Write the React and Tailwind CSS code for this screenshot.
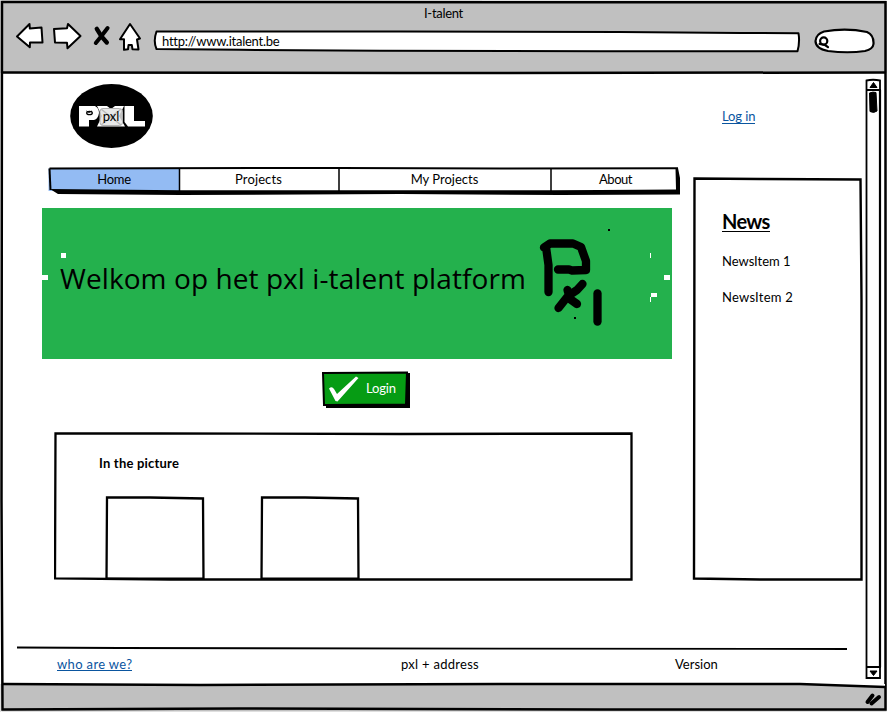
const ink = "#000";

function BackArrow() {
  return (
    <svg className="h-[28px] w-[29px]" viewBox="15 23 29 28" fill="#fff" stroke={ink} strokeWidth="2" strokeLinejoin="round">
      <path d="M17 37.5 L29.5 25 L29.8 29.5 L41.5 28.5 L42.5 43.5 L30 43.5 L29.8 48.3 Z" />
    </svg>
  );
}

function ForwardArrow() {
  return (
    <svg className="ml-[8px] h-[28px] w-[30px]" viewBox="52 23 30 28" fill="#fff" stroke={ink} strokeWidth="2" strokeLinejoin="round">
      <path d="M54 30 L67 29.3 L68 25 L80.5 37 L67.5 49.3 L67 43.8 L55 43.5 Q54.5 37 54 30 Z" />
    </svg>
  );
}

function StopIcon() {
  return (
    <svg className="ml-[10px] h-[28px] w-[20px]" viewBox="92 22 20 28" fill="none" stroke={ink} strokeLinecap="round">
      <path d="M96.8 28.8 L101.5 36.5 L106.8 42.5" strokeWidth="4.4" />
      <path d="M107.6 28 L101.5 36 L95.8 43" strokeWidth="4" />
    </svg>
  );
}

function HomeIcon() {
  return (
    <svg className="ml-[6px] h-[30px] w-[24px]" viewBox="118 22 24 30" fill="#fff" stroke={ink} strokeWidth="2" strokeLinejoin="round">
      <path d="M130 24 L140 38.5 L137 39.5 L138.5 49.5 L132.5 49.3 L131.8 45 L128.5 45 L128 49.3 L124 49.8 L124 39.3 L120 39.3 Z" />
    </svg>
  );
}

function Toolbar() {
  return (
    <div className="flex h-[30px] items-start">
      <BackArrow />
      <ForwardArrow />
      <StopIcon />
      <HomeIcon />
      <div className="relative ml-[11px] mt-[7px] flex h-[25px] w-[648px] items-center pl-[9px]">
        <svg className="absolute inset-0" width="648" height="25" viewBox="153 29 648 25" fill="#fff" stroke={ink} strokeWidth="2" strokeLinejoin="round">
          <path d="M156.5 31.5 Q240 31.2 400 31.5 T620 32 L740 33 L798.5 33.3 Q800 42 797.5 51.3 L600 51.3 L380 50.7 L240 49.8 L156.5 49 Q153 41 156.5 31.5 Z" />
        </svg>
        <span className="relative text-[13px] tracking-[-0.24px]">http://www.italent.be</span>
      </div>
      <svg className="ml-[12px] mt-[4px] h-[28px] w-[63px]" viewBox="813 26 63 28" fill="#fff" stroke={ink} strokeWidth="2.2" strokeLinejoin="round">
        <path d="M824 31.5 Q846 27.5 867 32 Q874 35 873.5 44 Q873 49 865 51 Q848 53.5 828 51 Q815.5 48.5 815.5 41 Q816 34 824 31.5 Z" />
        <circle cx="823.7" cy="41" r="3.6" />
        <path d="M819.500 44 L825 45 L828 47.200" fill="none" strokeLinecap="round" />
      </svg>
    </div>
  );
}

function Logo() {
  return (
    <div className="relative ml-[28px] mt-[10px] flex h-[66px] w-[84px] items-center justify-center">
      <svg className="absolute inset-0" width="84" height="66" viewBox="70 83 84 66">
        <ellipse cx="111.5" cy="116" rx="41.3" ry="32" fill={ink} />
        <g fill="#fff">
          <path d="M79 106 H95 Q99 108 99 113 Q98 119 94 120 H89 V126.500 H79 Z" />
          <path d="M97 106 H107 L111 109 L115 106 H124 L119 116 L125 126.500 H97 L102 116 Z" />
        </g>
        <ellipse cx="89.500" cy="113" rx="2.800" ry="1.700" fill="#fff" stroke={ink} strokeWidth="1.300" />
        <path d="M86.500 111 L89 112.500 L92 111" fill="none" stroke={ink} />
        <rect x="100" y="108.500" width="22.500" height="17" rx="3" fill="#e4e4e4" fillOpacity=".85" stroke="#b0b0b0" />
        <path d="M101 109 L121 125 M121 109 L101 125" stroke="#bbb" strokeWidth="1.500" />
        <path d="M124.500 106 H134 V121 H145 V126.500 H128 L124.500 122 Z" fill="#fff" />
      </svg>
      <span className="relative left-[-1px] top-[1px] text-[13px] tracking-[-0.1px]">pxl</span>
    </div>
  );
}

function NavBar() {
  return (
    <nav className="relative ml-[6px] mt-[17px] flex h-[29px] w-[633px] pl-[1px] text-[13px] leading-[27px]">
      <svg className="absolute inset-0" width="633" height="29" viewBox="48 166 633 29">
        <path d="M50 169 L676.500 168.500 L678.500 193 L52 193 Z" fill="#fff" />
        <path d="M48.500 168.500 L179 168.500 V191 H48.500 Z" fill="#93bbf3" />
        <path d="M49.500 168.500 L340 167.900 L500 168.500 L678 168.200" fill="none" stroke={ink} strokeWidth="2" />
        <path d="M49.500 168.500 L50.500 190" stroke={ink} strokeWidth="2" />
        <path d="M50 189 L180 190.300 L551 190.300 L600 190 L676 189.500 L675.500 168 L678 168 L680 178 L680 194.500 L560 195 L400 194 L180 195 L58 194 Z" fill={ink} />
        <path d="M179.500 168 V192 M339 168 V192 M551 168 V193" stroke={ink} strokeWidth="1.500" />
      </svg>
      <span className="relative w-[130px] text-center tracking-[-0.3px]">Home</span>
      <span className="relative w-[159px] text-center tracking-[0.12px]">Projects</span>
      <span className="relative w-[213px] text-center">My Projects</span>
      <span className="relative w-[129px] text-center tracking-[-0.5px]">About</span>
    </nav>
  );
}

function Banner() {
  return (
    <div className="relative mt-[13px] flex h-[151px] w-[630px] items-center bg-[#24b14d] pl-[18px]">
      <span className="relative -top-[6px] whitespace-nowrap font-['Open_Sans',sans-serif] text-[28px] tracking-[0.08px]">Welkom op het pxl i-talent platform</span>
      <svg className="absolute inset-0" width="630" height="151" viewBox="42 208 630 151">
        <g fill="none" stroke={ink} strokeWidth="8.300" strokeLinecap="round" strokeLinejoin="round">
          <path d="M548.500 292 V265 L546 247 L544 247.500 L550 243.500 H573 L581 247 L586 261 V270 L572 270.500 L569 269.500 H558" />
          <path d="M558.500 308 L568 296 L577 290 L582.500 284 M567.500 290 L570 299 L577 304" />
          <path d="M597.500 293.500 V321.500" />
        </g>
        <path d="M608 229 h2 v2 h-2 Z M574 317 h2 v2 h-2 Z" fill={ink} />
        <path d="M61 253 h5 v5 h-5 Z M42 275 h6 v5 h-6 Z M650 253 h1 v5 h-1 Z M664 275 h6 v5 h-6 Z M651 293 h6 v4 h-6 Z M650 297 h1 v5 h-1 Z" fill="#fff" />
      </svg>
    </div>
  );
}

function LoginButton() {
  return (
    <button className="relative ml-[279px] mt-[11px] flex h-[39px] w-[90px] items-center pl-[45px] text-[13px] text-white">
      <svg className="absolute inset-0" width="90" height="39" viewBox="321 370 90 39">
        <path d="M326 375 L410 373 V408 H326 Z" fill={ink} />
        <path d="M323 373 L407 372.500 L406 404.500 L324 405 Z" fill="#069c14" stroke={ink} strokeWidth="2" />
        <path d="M329 388.500 Q332 386 334 389 L337 394 L356 376.500 L358.500 378 L337.500 401.500 L335.500 401 Z" fill="#fff" />
      </svg>
      <span className="relative -top-[1px] tracking-[-0.15px]">Login</span>
    </button>
  );
}

function PictureBox() {
  return (
    <svg width="101" height="85" viewBox="105 496 101 85" fill="none" stroke={ink} strokeWidth="2.300">
      <path d="M106.500 580 L107 497.500 L150 497.500 L203 498.500 L203.500 580 M106 578.500 L204 578.700" />
    </svg>
  );
}

function PicturePanel() {
  return (
    <section className="relative ml-[12px] mt-[23px] h-[149px] w-[579px]">
      <svg className="absolute inset-0" width="579" height="149" viewBox="54 432 579 149" fill="none" stroke={ink} strokeWidth="2.300">
        <path d="M55.500 433.300 L160 433.500 L400 434 L631.500 433.500 L631.500 579.500 L400 579.500 L170 579.500 L55 578.300 Z" />
      </svg>
      <h2 className="pl-[45px] pt-[21px] text-[13px] font-bold leading-[20px] tracking-[0.2px]">In the picture</h2>
      <div className="flex gap-[54px] pl-[51px] pt-[23px]">
        <PictureBox />
        <PictureBox />
      </div>
    </section>
  );
}

function NewsPanel() {
  return (
    <aside className="relative mt-[51px] h-[404px] w-[171px] pl-[30px] pt-[30px] text-[13px]">
      <svg className="absolute inset-0" width="171" height="404" viewBox="692 177 171 404" fill="none" stroke={ink} strokeWidth="2.400">
        <path d="M694.500 178.500 L760 179 L860.500 179.500 L861.500 300 L861.500 579.500 L760 579.500 L694 578.500 Z" />
      </svg>
      <h2 className="h-[28px] text-[20px] font-bold leading-[28px] tracking-[-0.7px]">
        <span className="inline-block h-[25px] border-b border-black">News</span>
      </h2>
      <p className="mt-[16px] leading-[20px]">NewsItem 1</p>
      <p className="mt-[16px] leading-[20px] tracking-[0.25px]">NewsItem 2</p>
    </aside>
  );
}

function Footer() {
  return (
    <footer className="relative h-[40px] w-[865px] text-[13px]">
      <svg className="block" width="865" height="6" viewBox="0 645 865 6">
        <path d="M17 647.500 L120 648 L500 648.700 L847 649" stroke={ink} strokeWidth="1.800" fill="none" />
      </svg>
      <div className="flex pl-[57px] leading-[27px]">
        <a className="w-[344px] tracking-[0.35px] text-[#0a559f]">
          <span className="inline-block h-[20px] border-b border-[#0a559f]">who are we?</span>
        </a>
        <span className="w-[274px] tracking-[0.28px]">pxl + address</span>
        <span>Version</span>
      </div>
    </footer>
  );
}

function Scrollbar() {
  return (
    <svg className="mt-[5px] h-[602px] w-[18px]" viewBox="865 78 18 602" fill="none" stroke={ink} strokeWidth="1.800">
      <path d="M866.500 80.500 Q873 79 880 80.500 L880 678 L866.500 678 Z" />
      <path d="M866 90 H881 M866 667 H881" />
      <path d="M880 90 V667" strokeWidth="2.200" />
      <path d="M870 87.500 L873.500 82.500 L877 87.500 Z M870 671 H877 L873.500 675.500 Z" fill={ink} strokeWidth="1" />
      <path d="M869.500 93 Q873 91.500 876 92.500 L877 111 Q874 113.500 870 111.500 Z" fill={ink} strokeWidth="1" />
    </svg>
  );
}

export default function App() {
  return (
    <div className="relative flex h-[712px] w-[887px] flex-col overflow-hidden bg-white font-['Lato',sans-serif] text-black">
      <header className="h-[73px] bg-[#c0c0c0] pl-[15px]">
        <div className="flex h-[22px] items-end justify-center pr-[15px] text-[13px] leading-[18px] tracking-[-0.3px]">I-talent</div>
        <Toolbar />
      </header>
      <div className="flex h-[611px]">
        <div className="w-[865px]">
          <div className="flex h-[572px]">
            <main className="w-[650px] pl-[42px]">
              <Logo />
              <NavBar />
              <Banner />
              <LoginButton />
              <PicturePanel />
            </main>
            <div className="ml-[42px] w-[173px]">
              <a className="ml-[30px] mt-[33px] block h-[20px] text-[13px] leading-[20px] tracking-[-0.1px] text-[#0a559f]">
                <span className="inline-block h-[18px] border-b border-[#0a559f]">Log in</span>
              </a>
              <NewsPanel />
            </div>
          </div>
          <Footer />
        </div>
        <Scrollbar />
      </div>
      <div className="h-[28px] bg-[#c0c0c0]" />
      <svg className="pointer-events-none absolute inset-0" width="887" height="712" viewBox="0 0 887 712" fill="none" stroke={ink} strokeWidth="2.500">
        <path d="M1 0 H887 V712 H1 Z" stroke="#fff" strokeWidth="1" />
        <path d="M2 2 L885.500 2.300 L885.500 709.500 L600 709.500 L240 708.500 L2.500 709.500 L1.500 500 Z" />
        <path d="M2 72.500 L400 73 L885 72.500" />
        <path d="M885 687 L800 684 L885 684 Z" fill="#fff" stroke="none" />
        <path d="M2 684 L200 685 L500 684 L800 684 L885 687" />
        <path d="M867.500 702 L872.500 695.500 M871.500 703.500 L879 697" strokeWidth="4" strokeLinecap="round" />
      </svg>
    </div>
  );
}
